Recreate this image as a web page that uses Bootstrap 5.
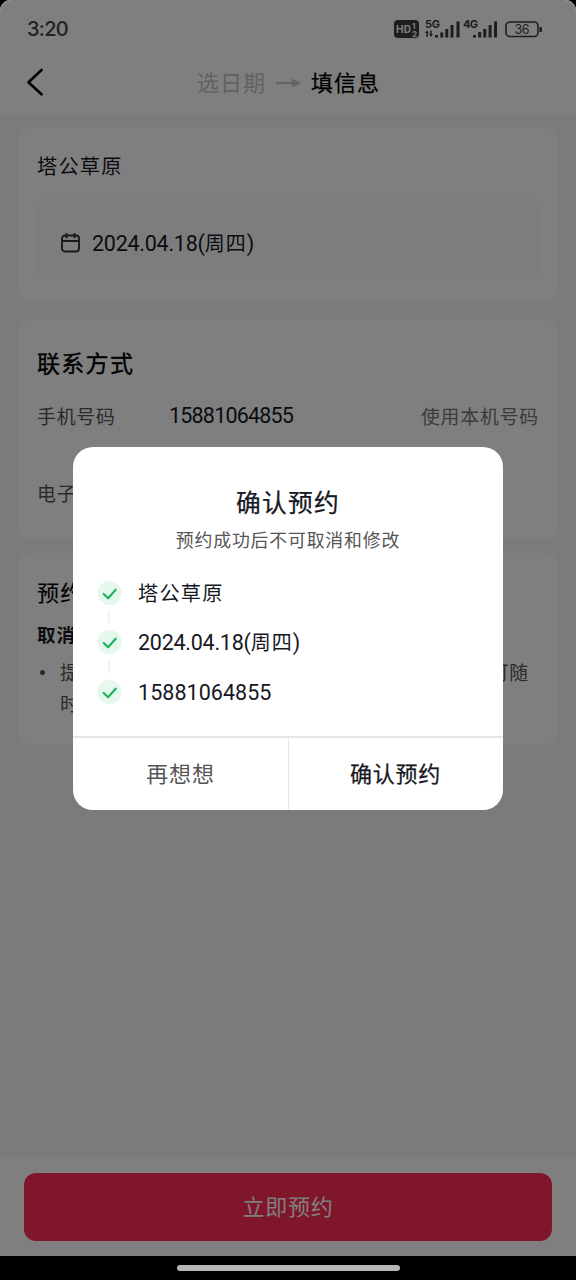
<!DOCTYPE html>
<html lang="zh-CN">
<head>
<meta charset="utf-8">
<meta name="viewport" content="width=device-width, initial-scale=1">
<title>填信息</title>
<link href="https://cdn.jsdelivr.net/npm/bootstrap@5.3.0/dist/css/bootstrap.min.css" rel="stylesheet">
<style>
  body { background:#000; color:#161823; font-family:Roboto,"Noto Sans CJK SC",sans-serif; font-size:20.2px; letter-spacing:1.2px; }
  .phone { width:576px; height:1280px; }
  .screen { height:1256px; background:#f7f7f7; border-radius:11px 11px 0 0; }
  .topbar { height:115px; background:#fefefe; }
  .status-row { height:57px; padding:0 33px 0 27px; }
  .clock { font:500 20px Inter,sans-serif; letter-spacing:-.7px; color:#444; }
  .title-row { height:50px; padding-left:25px; }
  .steps { font-size:22px; gap:10px; letter-spacing:1px; padding:2px 44px 0 0; }
  .step-off { color:#c4c4c4; }
  .medium { font-weight:400; -webkit-text-stroke:.25px currentColor; }
  .panel { margin:0 18px; padding:0 19px; background:#fefefe; border-radius:14px; }
  .panel-spot { height:174px; margin-top:13px; padding-top:24px; }
  .panel-contact { height:219px; margin-top:18px; padding-top:28px; }
  .panel-rules { height:191px; margin-top:14px; padding-top:24px; }
  .line30 { line-height:30px; }
  .date-box { height:81px; margin-top:15px; padding:14px 0 0 23px; border-radius:10px; background:#fafafa; }
  .num { font-size:21.5px; letter-spacing:-.25px; }
  .num-long { letter-spacing:.05px; }
  .num-field { letter-spacing:-.8px; margin-top:-3px; }
  .num .cn { font-size:20px; letter-spacing:1.1px; }
  .section-title { font-size:23px; line-height:34px; font-weight:400; -webkit-text-stroke:.35px #000; letter-spacing:1.3px; color:#000; }
  .rule-title { font-size:22px; -webkit-text-stroke-width:.15px; }
  .form-line { height:40px; font-size:18.8px; letter-spacing:.9px; }
  .form-phone { margin-top:16px; }
  .form-mail { margin-top:37px; }
  .form-label-col { width:132px; color:#555; }
  .muted { color:#777; }
  .rules-head { font-size:18.5px; margin-top:11px; letter-spacing:1px; line-height:28px; }
  .rules-text { font-size:18.8px; line-height:31px; color:#555; letter-spacing:.75px; margin-top:9px; }
  .dot { width:5px; height:5px; margin:11px 15px 0 3px; background:#555; }
  .bottom-bar { height:99px; background:#fefefe; padding:16px 24px 15px; }
  .btn-book { background:#ff2c55; color:#fff; border-radius:12px; font-size:22px; font-weight:400; letter-spacing:.8px; }
  .home-strip { height:24px; }
  .home-pill { width:223px; height:6px; background:#b6b6b6; }
  .scrim { position:absolute; inset:0 0 24px; border-radius:11px 11px 0 0; background:rgba(0,0,0,.5); }
  .confirm-layer { position:absolute; height:1256px; overflow:hidden; }
  .confirm-layer .modal-dialog { width:430px; max-width:430px; margin:0 auto; min-height:1257px; }
  .confirm-layer .modal-content { height:363px; border:0; border-radius:20px; overflow:hidden; }
  .confirm-title { font-size:24.7px; line-height:36px; letter-spacing:1.3px; padding-top:15px; }
  .confirm-sub { font-size:17.9px; line-height:26px; letter-spacing:.8px; color:#555; margin-top:6px; }
  .check-list { margin:24px 0 0 24px; }
  .check-item { height:49.3px; gap:15px; }
  .check-mark { height:49.3px; width:26px; }
  .check-text { line-height:32px; }
  .confirm-actions { height:74px; border-top:2px solid #e6e6e6; }
  .confirm-actions .btn { border:0; border-radius:0; font-size:22px; letter-spacing:.8px; }
  .confirm-actions .btn-think { color:#555; box-shadow:1px 0 #e8e8e8; }
  .confirm-actions .btn-sure { color:#161823; }
</style>
</head>
<body>
<div class="phone position-relative overflow-hidden">
  <main class="screen d-flex flex-column overflow-hidden">
    <header class="topbar">
      <div class="status-row d-flex align-items-center justify-content-between">
        <span class="clock">3:20</span>
        <svg width="150" height="22" viewBox="0 0 150 22" fill="#3c3c3c" font-family="Inter,sans-serif" font-weight="700" letter-spacing="0">
          <rect x="1" y="2" width="25" height="18" rx="4"/>
          <text x="3" y="15" font-size="10" fill="#fefefe" textLength="15">HD</text>
          <text x="19" y="10.5" font-size="8" fill="#fefefe">1</text>
          <text x="19" y="18.5" font-size="8" fill="#fefefe">2</text>
          <text x="32" y="9.5" font-size="11" textLength="15">5G</text>
          <path d="M32 15l2-2.500 2 2.500h-1.200v4h-1.500v-4zM36 16h1.200v-3.500h1.500v3.500H40l-2 3zM42 17h3v2.500h-3zM47.300 14.500h3v5h-3zM52.300 11h3v8.500h-3zM57.500 7h3v12.500h-3zM63.500 3.500h3v16h-3z"/>
          <text x="70" y="9.500" font-size="11" textLength="15">4G</text>
          <path d="M80 17h3v2.500h-3zM85.200 14h3v5.500h-3zM90.300 11h3v8.500h-3zM95.600 7h3v12.500h-3zM101 3.500h3v16h-3z"/>
          <rect x="113" y="4" width="32" height="14.500" rx="4" fill="none" stroke="#3c3c3c" stroke-width="1.600"/>
          <path d="M146.500 9h1.500q1 0 1 1v3q0 1-1 1h-1.500z"/>
          <text x="121.500" y="16" font-size="12.500" font-weight="400" textLength="15">36</text>
        </svg>
      </div>
      <div class="title-row d-flex align-items-center">
        <svg width="20" height="28" viewBox="0 0 20 28" fill="none" stroke="#000" stroke-width="2.600" stroke-linecap="round" stroke-linejoin="round"><path d="M16.500 2L3.500 14.300l13 12"/></svg>
        <div class="steps d-flex align-items-center justify-content-center flex-grow-1">
          <span class="step-off">选日期</span>
          <svg width="25" height="12" viewBox="0 0 25 12" fill="none" stroke="#c9c9c9"><path d="M0 6h18" stroke-width="2.400"/><path d="M16 1.500l9 4.500-9 4.500z" fill="#c9c9c9" stroke="none"/></svg>
          <span class="medium text-black">填信息</span>
        </div>
      </div>
    </header>

    <section class="panel panel-spot">
      <div class="line30">塔公草原</div>
      <div class="date-box d-flex align-items-center">
        <svg class="mb-1" width="20" height="20" viewBox="0 0 20 20" fill="none" stroke="#333" stroke-width="1.900" stroke-linecap="round"><rect x="2" y="2.500" width="17" height="16" rx="3"/><path d="M2 8h17M6.500 .900v3.500M14.500 .900v3.500"/></svg>
        <span class="num ms-2 ps-1">2024.04.18(<span class="cn">周四</span>)</span>
      </div>
    </section>

    <section class="panel panel-contact">
      <h2 class="section-title mb-0">联系方式</h2>
      <div class="form-line form-phone d-flex align-items-center">
        <span class="form-label-col">手机号码</span>
        <span class="num num-field">15881064855</span>
        <span class="muted ms-auto">使用本机号码</span>
      </div>
      <div class="form-line form-mail d-flex align-items-center">
        <span class="form-label-col">电子邮箱</span>
      </div>
    </section>

    <section class="panel panel-rules">
      <h2 class="section-title rule-title mb-0">预约须知</h2>
      <div class="fw-bold rules-head">取消规则</div>
      <div class="rules-text d-flex">
        <span class="dot rounded-circle flex-shrink-0"></span>
        <span class="text-nowrap">提交预约后如需要取消请在预约的使用日期前操作可随<br>时退</span>
      </div>
    </section>

    <footer class="bottom-bar d-flex mt-auto">
      <button class="btn btn-book w-100">立即预约</button>
    </footer>
  </main>
  <div class="home-strip bg-black d-flex align-items-center justify-content-center"><div class="home-pill rounded-pill"></div></div>

  <div class="scrim"></div>
  <div class="modal confirm-layer d-block" role="dialog">
    <div class="modal-dialog modal-dialog-centered">
      <div class="modal-content">
        <div class="text-center flex-grow-0">
          <div class="confirm-title medium mt-4">确认预约</div>
          <div class="confirm-sub">预约成功后不可取消和修改</div>
        </div>
        <div class="check-list">
          <div class="check-item d-flex">
            <svg class="check-mark" viewBox="0 0 26 49.300" fill="none"><circle cx="12.500" cy="15" r="12" fill="#e6f7ed"/><path d="M6.700 16l4.400 4.300 7.600-8.600" stroke="#20b35e" stroke-width="2.200" stroke-linecap="round" stroke-linejoin="round"/><path d="M12 32.500v13" stroke="#f2f2f2" stroke-width="2"/></svg>
            <span class="check-text">塔公草原</span>
          </div>
          <div class="check-item d-flex">
            <svg class="check-mark" viewBox="0 0 26 49.300" fill="none"><circle cx="12.500" cy="15" r="12" fill="#e6f7ed"/><path d="M6.700 16l4.400 4.300 7.600-8.600" stroke="#20b35e" stroke-width="2.200" stroke-linecap="round" stroke-linejoin="round"/><path d="M12 32.500v13" stroke="#f2f2f2" stroke-width="2"/></svg>
            <span class="check-text num">2024.04.18(<span class="cn">周四</span>)</span>
          </div>
          <div class="check-item d-flex">
            <svg class="check-mark" viewBox="0 0 26 49.300" fill="none"><circle cx="12.500" cy="15" r="12" fill="#e6f7ed"/><path d="M6.700 16l4.400 4.300 7.600-8.600" stroke="#20b35e" stroke-width="2.200" stroke-linecap="round" stroke-linejoin="round"/></svg>
            <span class="check-text num num-long">15881064855</span>
          </div>
        </div>
        <div class="confirm-actions d-flex mt-auto">
          <button class="btn btn-think w-50">再想想</button>
          <button class="btn btn-sure medium w-50">确认预约</button>
        </div>
      </div>
    </div>
  </div>
</div>
<script src="https://cdn.jsdelivr.net/npm/bootstrap@5.3.0/dist/js/bootstrap.bundle.min.js"></script>
</body>
</html>
